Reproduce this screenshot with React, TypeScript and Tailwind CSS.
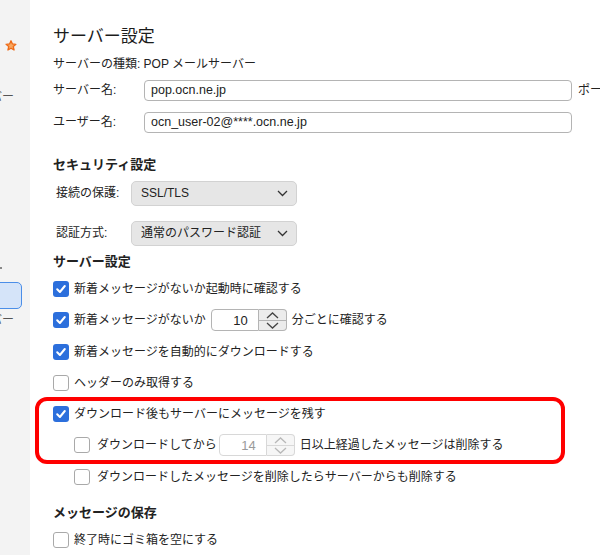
import React from 'react';

const font = { fontFamily: '"Liberation Sans", "Noto Sans CJK JP", sans-serif' };

function Check({ checked }: { checked?: boolean }) {
    if (checked) {
        return (
            <span className="flex h-[16px] w-[16px] shrink-0 items-center justify-center rounded-[3px] bg-[#2c6fdc]">
                <svg width="12" height="12" viewBox="0 0 12 12">
                    <path d="M2.2 6.3 L4.9 9 L9.8 3" fill="none" stroke="#fff" strokeWidth="2" strokeLinecap="round" strokeLinejoin="round" />
                </svg>
            </span>
        );
    }
    return <span className="block h-[16px] w-[16px] shrink-0 rounded-[3px] border border-[#a9a9a9] bg-white" />;
}

function Stepper({ disabled }: { disabled?: boolean }) {
    const stroke = disabled ? '#b8b8b8' : '#444';
    return (
        <div className={`flex h-full w-[28px] flex-col rounded-r-[4px] border border-l-0 ${disabled ? 'border-[#d8d8d8] bg-[#f6f6f6]' : 'border-[#b4b4b4] bg-[#ececec]'}`}>
            <div className={`flex flex-1 items-center justify-center border-b ${disabled ? 'border-[#d8d8d8]' : 'border-[#b4b4b4]'}`}>
                <svg width="13" height="7" viewBox="0 0 13 7"><path d="M1 6 L6.5 1 L12 6" fill="none" stroke={stroke} strokeWidth="1.3" /></svg>
            </div>
            <div className="flex flex-1 items-center justify-center">
                <svg width="13" height="7" viewBox="0 0 13 7"><path d="M1 1 L6.5 6 L12 1" fill="none" stroke={stroke} strokeWidth="1.3" /></svg>
            </div>
        </div>
    );
}

function NumberField({ value, disabled }: { value: string; disabled?: boolean }) {
    return (
        <div className="flex h-[22px]">
            <div className={`flex w-[48px] items-center justify-end rounded-l-[4px] border pr-[10px] text-[13px] ${disabled ? 'border-[#d8d8d8] bg-white text-[#9a9a9a]' : 'border-[#b4b4b4] bg-white text-[#222]'}`}>
                {value}
            </div>
            <Stepper disabled={disabled} />
        </div>
    );
}

function Select({ label }: { label: string }) {
    return (
        <div className="flex h-[25px] w-[166px] items-center justify-between rounded-[5px] border border-[#d2d2d2] bg-[#e6e6e6] pl-[9px] pr-[8px] text-[#222]">
            <span>{label}</span>
            <svg width="11" height="7" viewBox="0 0 11 7"><path d="M1 1 L5.5 5.5 L10 1" fill="none" stroke="#333" strokeWidth="1.3" /></svg>
        </div>
    );
}

function Row({ children, indent }: { children: React.ReactNode; indent?: boolean }) {
    return (
        <div className={`flex h-[31.25px] items-center ${indent ? 'gap-[7px] pl-[21px]' : 'gap-[5px]'}`}>
            {children}
        </div>
    );
}

function Sidebar() {
    return (
        <div className="flex w-[30px] shrink-0 flex-col overflow-hidden bg-[#f3f3f3] text-[12px] text-[#555]">
            <div className="ml-[5px] mt-[40px]">
                <svg width="12" height="11" viewBox="0 0 24 22">
                    <path d="M12 1.5 L14.9 7.9 L21.8 8.6 L16.6 13.2 L18.1 20 L12 16.5 L5.9 20 L7.4 13.2 L2.2 8.6 L9.1 7.9 Z" fill="#f8a760" stroke="#ee6a17" strokeWidth="2.6" strokeLinejoin="round" />
                </svg>
            </div>
            <div className="-ml-[10px] mt-[36px] whitespace-nowrap leading-[20px]">バー</div>
            <div className="mt-[160px] h-[2px] w-[2px] bg-[#888]" />
            <div className="-ml-[6px] mt-[13px] h-[27px] w-[28px] rounded-[5px] border-[1.5px] border-[#4b8ee8] bg-[#d5e4f9]" />
            <div className="-ml-[10px] mt-[1px] whitespace-nowrap leading-[20px]">バー</div>
        </div>
    );
}

export default function App() {
    return (
        <div className="flex h-[555px] w-[600px] overflow-hidden bg-white" style={font}>
            <Sidebar />
            <div className="relative flex min-w-0 flex-1 flex-col pl-[23px] text-[12px] text-[#222]">
                <div className="mt-[25px] whitespace-nowrap text-[17px] leading-[24px] text-[#1c1c1c]">サーバー設定</div>
                <div className="mt-[5px] whitespace-nowrap leading-[20px]">サーバーの種類: POP メールサーバー</div>

                <div className="mt-[6px] flex h-[22px] items-center">
                    <span className="w-[91px] shrink-0">サーバー名:</span>
                    <div className="flex h-full w-[428px] shrink-0 items-center rounded-[4px] border border-[#b4b4b4] pl-[6px] text-[12.5px]">pop.ocn.ne.jp</div>
                    <span className="ml-[6px] whitespace-nowrap">ポート</span>
                </div>
                <div className="mt-[11px] flex h-[22px] items-center">
                    <span className="w-[91px] shrink-0">ユーザー名:</span>
                    <div className="flex h-full w-[428px] shrink-0 items-center rounded-[4px] border border-[#b4b4b4] pl-[6px] text-[12.5px]">ocn_user-02@****.ocn.ne.jp</div>
                </div>

                <div className="mt-[22px] text-[13px] font-bold leading-[20px]">セキュリティ設定</div>
                <div className="mt-[6px] flex items-center">
                    <span className="w-[78px] shrink-0 pl-[3px]">接続の保護:</span>
                    <Select label="SSL/TLS" />
                </div>
                <div className="mt-[15px] flex items-center">
                    <span className="w-[78px] shrink-0 pl-[3px]">認証方式:</span>
                    <Select label="通常のパスワード認証" />
                </div>

                <div className="mt-[6px] text-[13px] font-bold leading-[20px]">サーバー設定</div>
                <div className="mt-[2px] flex flex-col whitespace-nowrap">
                    <Row><Check checked /><span>新着メッセージがないか起動時に確認する</span></Row>
                    <Row>
                        <Check checked />
                        <span>新着メッセージがないか</span>
                        <NumberField value="10" />
                        <span>分ごとに確認する</span>
                    </Row>
                    <Row><Check checked /><span>新着メッセージを自動的にダウンロードする</span></Row>
                    <Row><Check /><span>ヘッダーのみ取得する</span></Row>
                    <Row><Check checked /><span>ダウンロード後もサーバーにメッセージを残す</span></Row>
                    <Row indent>
                        <Check />
                        <span className="mr-[-5px]">ダウンロードしてから</span>
                        <NumberField value="14" disabled />
                        <span className="-ml-[2px]">日以上経過したメッセージは削除する</span>
                    </Row>
                    <Row indent><Check /><span>ダウンロードしたメッセージを削除したらサーバーからも削除する</span></Row>
                </div>

                <div className="mt-[10.5px] text-[13px] font-bold leading-[20px]">メッセージの保存</div>
                <div className="mt-[2px]">
                    <Row><Check /><span>終了時にゴミ箱を空にする</span></Row>
                </div>

                <div className="pointer-events-none absolute left-[5px] top-[397px] h-[67px] w-[530px] rounded-[12px] border-[4px] border-[#f00]" />
            </div>
        </div>
    );
}
